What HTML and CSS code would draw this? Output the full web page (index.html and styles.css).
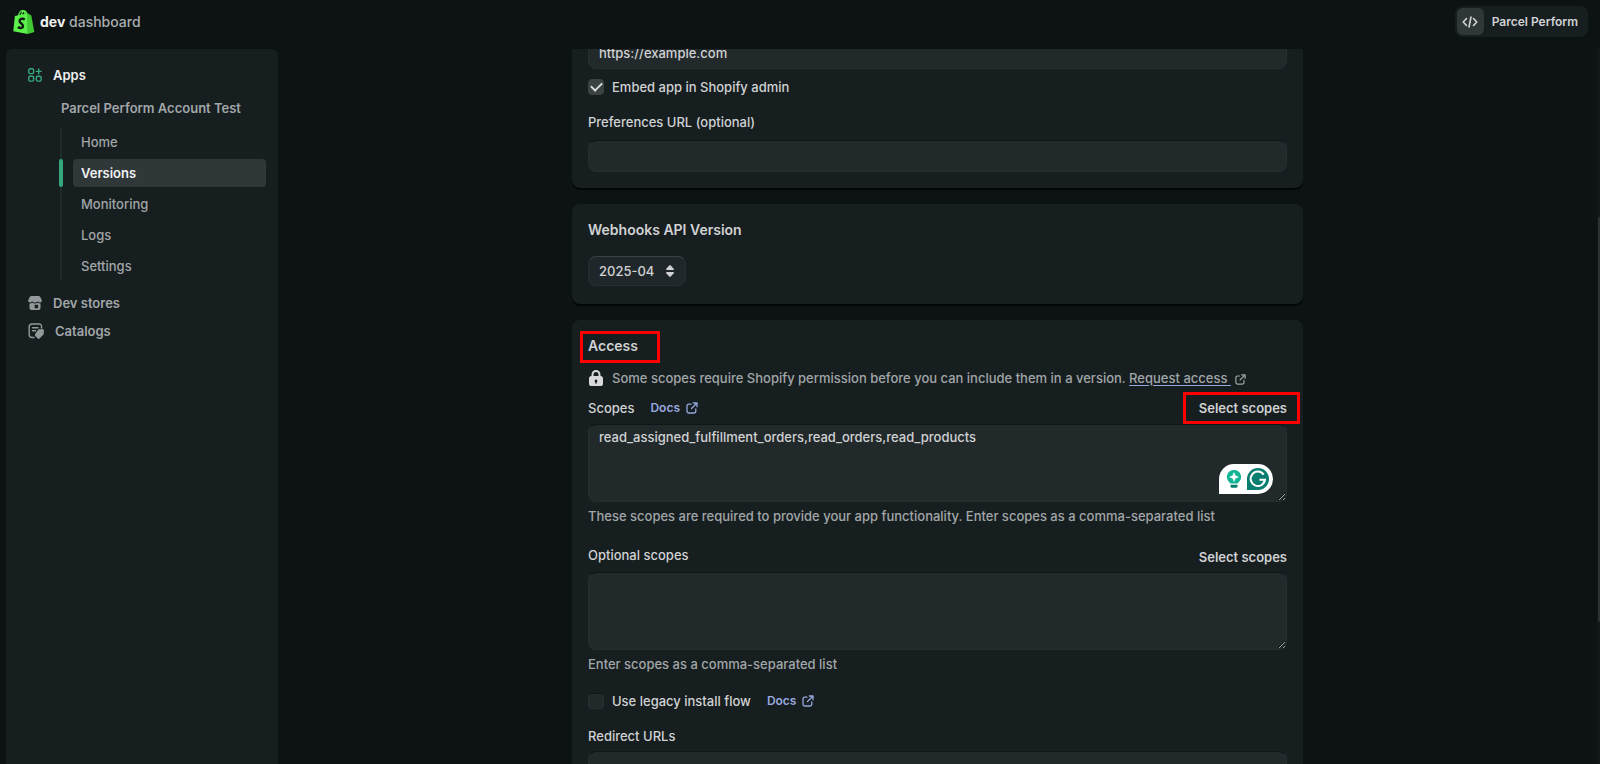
FILE: index.html
```html
<!DOCTYPE html>
<html lang="en">

<head>
    <meta charset="UTF-8">
    <meta name="viewport" content="width=device-width, initial-scale=1">
    <title>dev dashboard</title>
    <link rel="stylesheet" href="styles.css">
</head>

<body>
    <svg class="sprite" aria-hidden="true">
        <symbol id="external" viewBox="0 0 12 12">
            <path d="M5 2.2H2.7A1.7 1.7 0 0 0 1 3.900V9.300A1.700 1.700 0 0 0 2.700 11H8.100A1.700 1.700 0 0 0 9.800 9.300V7M7.300 1H11V4.700M11 1L5.500 6.500" fill="none" stroke="currentColor" stroke-width="1.300" stroke-linecap="round" stroke-linejoin="round" />
        </symbol>
    </svg>
    <header class="topbar">
        <a class="brand" href="#">
            <svg width="22" height="26" viewBox="0 0 22 26" aria-hidden="true">
                <path d="M1.900 7.100L14.800 4.300V24.900L.3 22.200Z" fill="#5cf24b" />
                <path d="M14.800 4.300L18.300 6.400L21.300 22.900L14.800 24.900Z" fill="#41c932" />
                <path d="M5.500 7C6.300 3.600 8.300 1.500 9.900 1.700C11.600 2 12 4 12 5.600M8.500 6.200C8.800 3.200 10.500 1.400 12 2C13.200 2.500 13.600 4 13.700 5.300" fill="none" stroke="#5cf24b" stroke-width="1.300" />
                <path d="M11.800 10.300C9.300 9.100 6.500 10 6.600 12.100C6.700 14.500 10.100 14.500 10 17C9.900 19.600 6.700 19.500 4.900 18" fill="none" stroke="#0c1a10" stroke-width="2.400" />
            </svg>
            <span><b>dev</b> dashboard</span>
        </a>
        <button class="account" type="button">
            <span class="account-icon">
                <svg width="16" height="12" viewBox="0 0 16 12" fill="none" stroke="currentColor" stroke-width="1.600" stroke-linecap="round" stroke-linejoin="round" aria-hidden="true">
                    <path d="M4.500 2.500L1.200 6L4.500 9.500M11.500 2.500L14.800 6L11.500 9.500M9 1L7 11" />
                </svg>
            </span>
            Parcel Perform
        </button>
    </header>

    <div class="layout">
        <nav class="sidebar">
            <a class="nav-top active" href="#">
                <svg width="14" height="14" viewBox="0 0 14 14" fill="none" stroke="#36a67d" stroke-width="1.400" stroke-linecap="round" aria-hidden="true">
                    <rect x=".8" y=".8" width="4.800" height="4.800" rx="1.300" />
                    <rect x=".8" y="8.300" width="4.800" height="4.800" rx="1.300" />
                    <rect x="8.300" y="8.300" width="4.800" height="4.800" rx="1.300" />
                    <path d="M10.700 1V5.800M8.300 3.400H13.100" />
                </svg>
                Apps
            </a>
            <a class="nav-app" href="#">Parcel Perform Account Test</a>
            <div class="nav-tree">
                <a href="#">Home</a>
                <a class="current" href="#">Versions</a>
                <a href="#">Monitoring</a>
                <a href="#">Logs</a>
                <a href="#">Settings</a>
            </div>
            <a class="nav-top" href="#">
                <svg width="14" height="14" viewBox="0 0 14 14" aria-hidden="true">
                    <path d="M3.200 0H10.800Q11.700 0 12.100 .8L13.900 4.200Q14 6.400 12 6.500Q10.500 6.500 10 5.300Q9 6.500 7 6.500Q5 6.500 4 5.300Q3.500 6.500 2 6.500Q0 6.400 .1 4.200L1.900 .8Q2.300 0 3.200 0Z" fill="#94999b" />
                    <path d="M1.500 7.400Q3 7.600 4.100 6.800Q7 8.300 9.900 6.800Q11 7.600 12.500 7.400V12Q12.500 14 10.500 14H3.500Q1.500 14 1.500 12Z" fill="#94999b" />
                    <path d="M6.700 9.300Q6.700 8.700 7.300 8.700H9.500Q10.100 8.700 10.100 9.300V12.300H6.700Z" fill="#171e20" />
                </svg>
                Dev stores
            </a>
            <a class="nav-top" href="#">
                <svg width="16" height="16" viewBox="0 0 16 16" fill="none" stroke="#94999b" stroke-width="1.400" stroke-linecap="round" aria-hidden="true">
                    <path d="M13.500 5V3.500Q13.500 1 11 1H4Q1.200 1 1.200 3.800V11.500Q1.200 14.500 4 14.500H6M4.500 4.800H10M4.500 7.700H7.500" />
                    <path d="M10.900 7L14.300 6.700Q15.200 6.600 15.200 7.600L15 11L11.500 14.600Q10.700 15.300 9.900 14.600L8 12.700Q7.300 11.900 8 11Z" fill="#94999b" />
                </svg>
                Catalogs
            </a>
        </nav>

        <main class="content">
            <form class="cards">
                <section class="card">
                    <input class="field" id="app-url" type="text" value="https://example.com" aria-label="App URL">
                    <div class="check-row">
                        <input class="check" type="checkbox" id="embed" checked>
                        <label for="embed">Embed app in Shopify admin</label>
                    </div>
                    <label class="field-label" for="preferences">Preferences URL (optional)</label>
                    <input class="field" id="preferences" type="text">
                </section>

                <section class="card webhooks">
                    <h2 id="webhooks">Webhooks API Version</h2>
                    <div class="select">
                        <select aria-labelledby="webhooks">
                            <option>2025-04</option>
                        </select>
                        <svg width="8" height="12" viewBox="0 0 8 12" fill="#d0d2d3" aria-hidden="true">
                            <path d="M3.200 .6Q4 -.2 4.800 .6L7.700 3.800Q8.200 4.900 7.200 5H.8Q-.2 4.900 .3 3.800Z" />
                            <path d="M3.200 11.400Q4 12.200 4.800 11.400L7.700 8.200Q8.200 7.100 7.200 7H.8Q-.2 7.100 .3 8.200Z" />
                        </svg>
                    </div>
                </section>

                <section class="card">
                    <h2 class="marked marked-title">Access</h2>
                    <p class="notice">
                        <svg width="16" height="16" viewBox="0 0 16 16" aria-hidden="true">
                            <path d="M4.500 7V4.500A3.500 3.500 0 0 1 11.500 4.500V7" fill="none" stroke="#d6d8d9" stroke-width="2" />
                            <path d="M3.500 6H12.500Q15 6 15 8.500V14Q15 16 13 16H3Q1 16 1 14V8.500Q1 6 3.500 6ZM8 9.400A1.500 1.500 0 0 0 7.200 12.100V13.400H8.800V12.100A1.500 1.500 0 0 0 8 9.400Z" fill="#d6d8d9" />
                        </svg>
                        <span>Some scopes require Shopify permission before you can include them in a version.
                            <a class="request" href="#"><u>Request access&nbsp;</u><svg width="11" height="11" aria-hidden="true"><use href="#external" /></svg></a></span>
                    </p>
                    <div class="scope-head">
                        <label for="scopes">Scopes</label>
                        <a class="docs" href="#">Docs <svg width="12" height="12" aria-hidden="true"><use href="#external" /></svg></a>
                        <button class="select-scopes marked marked-button" type="button">Select scopes</button>
                    </div>
                    <div class="editor">
                        <textarea class="field" id="scopes" spellcheck="false">read_assigned_fulfillment_orders,read_orders,read_products</textarea>
                        <div class="assistant">
                            <svg width="16" height="20" viewBox="0 0 16 20" aria-hidden="true">
                                <path d="M8 1A7 7 0 0 1 12.500 13.400L11.500 14.500H4.500L3.500 13.400A7 7 0 0 1 8 1Z" fill="#11b494" />
                                <path d="M8 3.700L9.300 6.700L12.300 8L9.300 9.300L8 12.300L6.700 9.300L3.700 8L6.700 6.700Z" fill="#fff" stroke="#fff" stroke-width=".6" stroke-linejoin="round" />
                                <path d="M4.500 15.700H11.500V17.200Q11.500 18.700 10 18.700H6Q4.500 18.700 4.500 17.200Z" fill="#087e70" />
                            </svg>
                            <svg width="22" height="22" viewBox="0 0 22 22" aria-hidden="true">
                                <path d="M0 22V11A11 11 0 1 1 11 22Z" fill="#087e70" />
                                <path d="M16.700 6.600A7.200 7.200 0 1 0 18 11.700H12.500M18 11.700L16.200 15.400" fill="none" stroke="#fff" stroke-width="2" />
                            </svg>
                        </div>
                    </div>
                    <p class="help">These scopes are required to provide your app functionality. Enter scopes as a comma-separated list</p>

                    <div class="scope-head optional">
                        <label for="optional-scopes">Optional scopes</label>
                        <button class="select-scopes" type="button">Select scopes</button>
                    </div>
                    <textarea class="field" id="optional-scopes"></textarea>
                    <p class="help">Enter scopes as a comma-separated list</p>

                    <div class="check-row legacy">
                        <input class="check" type="checkbox" id="legacy">
                        <label for="legacy">Use legacy install flow</label>
                        <a class="docs" href="#">Docs <svg width="12" height="12" aria-hidden="true"><use href="#external" /></svg></a>
                    </div>
                    <label class="field-label redirects" for="redirects">Redirect URLs</label>
                    <textarea class="field" id="redirects"></textarea>
                </section>
            </form>
        </main>
        <div class="scrollbar"></div>
    </div>
</body>

</html>
```

FILE: styles.css
```css
* {
    box-sizing: border-box;
}

body {
    margin: 0;
    height: 100vh;
    display: flex;
    flex-direction: column;
    overflow: hidden;
    background: #0d1313;
    color: #d0d2d3;
    color-scheme: dark;
    font-family: Inter, "Liberation Sans", sans-serif;
    font-size: 13px;
    font-weight: 500;
    line-height: 20px;
}

a {
    color: inherit;
    text-decoration: none;
}

button,
input,
select,
textarea {
    font: inherit;
    color: inherit;
}

h2,
p {
    margin: 0;
}

h2 {
    font-size: 14px;
    font-weight: 600;
}

.sprite {
    position: absolute;
    width: 0;
    height: 0;
}

/* top bar */

.topbar {
    flex: none;
    display: flex;
    justify-content: space-between;
    height: 49px;
    padding: 6px 12px 0 13px;
}

.brand {
    display: flex;
    align-items: center;
    gap: 5px;
    height: 32px;
    font-size: 14px;
    color: #a9adaf;
}

.brand b {
    font-weight: 700;
    color: #f0f2f2;
}

.account {
    display: flex;
    align-items: center;
    gap: 8px;
    height: 31px;
    padding: 2px 10px 2px 2px;
    border: 0;
    border-radius: 8px;
    background: #171e20;
    font-size: 12px;
    font-weight: 600;
}

.account-icon {
    display: grid;
    place-items: center;
    width: 27px;
    height: 27px;
    border-radius: 6px;
    background: #303739;
}

/* sidebar */

.layout {
    flex: 1;
    display: flex;
    min-height: 0;
}

.sidebar {
    flex: none;
    width: 272px;
    margin-left: 6px;
    padding: 12px 12px 0 22px;
    border-radius: 6px 6px 0 0;
    background: #171e20;
    color: #a1a6a8;
}

.nav-top {
    display: flex;
    align-items: center;
    gap: 11px;
    height: 28px;
    font-weight: 600;
}

.nav-top.active {
    color: #f0f2f2;
}

.nav-app {
    display: block;
    margin: 9px 0 10px 33px;
    font-weight: 600;
}

.nav-tree {
    display: flex;
    flex-direction: column;
    gap: 3px;
    margin: 0 0 9px 32px;
    padding-left: 11px;
    border-left: 2px solid #1d2c2b;
}

.nav-tree a {
    position: relative;
    padding: 4px 8px;
    border-radius: 4px;
}

.nav-tree .current {
    background: #303739;
    color: #f0f2f2;
    font-weight: 600;
}

.nav-tree .current::before {
    content: "";
    position: absolute;
    left: -14px;
    top: 0;
    bottom: 0;
    width: 4px;
    border-radius: 2px;
    background: #36a67d;
}

/* cards */

.content {
    flex: 1;
    overflow: hidden;
    display: flex;
    justify-content: center;
}

.cards {
    width: 100%;
    max-width: 731px;
    margin-top: -28px;
    display: flex;
    flex-direction: column;
    gap: 16px;
}

.card {
    padding: 16px;
    border-radius: 8px;
    background: #171e20;
    box-shadow: 0 2px 0 #030606;
}

.card.webhooks {
    padding-bottom: 18px;
}

.field {
    display: block;
    width: 100%;
    height: 32px;
    margin: 0;
    padding: 0 10px;
    border: 1px solid #272e30;
    border-top-color: #101617;
    border-radius: 8px;
    outline: 0;
    background: #22292b;
}

textarea.field {
    height: 78px;
    padding: 2px 10px;
    resize: vertical;
}

.field-label {
    display: block;
    margin-bottom: 8px;
}

.field-label.redirects {
    margin-bottom: 5px;
}

.check-row {
    display: flex;
    align-items: center;
    gap: 8px;
    margin: 8px 0 15px;
}

.check {
    appearance: none;
    width: 16px;
    height: 16px;
    margin: 0;
    border: 1px solid #272e30;
    border-top-color: #101617;
    border-radius: 4px;
    background: #22292b;
}

.check:checked {
    display: grid;
    place-items: center;
    border-color: #3b4244;
    background: #3b4244;
}

.check:checked::before {
    content: "";
    width: 9px;
    height: 5px;
    margin-bottom: 3px;
    border-left: 2px solid #d6d8d9;
    border-bottom: 2px solid #d6d8d9;
    transform: rotate(-45deg);
}

.select {
    display: inline-grid;
    align-items: center;
    margin-top: 16px;
    vertical-align: top;
}

.select > * {
    grid-area: 1 / 1;
}

.select select {
    appearance: none;
    width: 98px;
    height: 30px;
    padding: 0 10px;
    border: 1px solid #272e30;
    border-top-color: #3b4244;
    border-radius: 8px;
    background: #20272a;
}

.select svg {
    justify-self: end;
    margin-right: 12px;
    pointer-events: none;
}

/* access card */

.notice {
    display: flex;
    align-items: center;
    gap: 8px;
    margin: 12px 0 10px;
    color: #a1a6a8;
}

.request u {
    text-decoration-color: #97a8df;
    text-underline-offset: 2px;
}

.request svg {
    margin-left: 4px;
    vertical-align: -2px;
}

.scope-head {
    display: flex;
    align-items: center;
    gap: 16px;
    margin-bottom: 6px;
}

.scope-head.optional {
    align-items: flex-start;
    margin: 19px 0 5px;
}

.docs {
    display: flex;
    align-items: center;
    gap: 6px;
    color: #97a8df;
    font-size: 12px;
    font-weight: 600;
}

.select-scopes {
    margin-left: auto;
    padding: 0;
    border: 0;
    background: none;
    font-weight: 600;
}

.optional .select-scopes {
    padding-top: 2px;
}

.editor {
    position: relative;
}

.assistant {
    position: absolute;
    right: 14px;
    bottom: 8px;
    display: flex;
    align-items: center;
    gap: 5px;
    padding: 4px 4px 4px 7px;
    border-radius: 15px 15px 15px 0;
    background: #fff;
}

.assistant svg {
    display: block;
}

.help {
    margin-top: 4px;
    color: #a1a6a8;
}

.check-row.legacy {
    margin-top: 17px;
}

.legacy .docs {
    margin-left: 8px;
}

/* red callouts */

.marked {
    position: relative;
}

.marked::after {
    content: "";
    position: absolute;
    border: 3px solid #f00;
    border-radius: 1px;
}

.marked-title {
    width: max-content;
}

.marked-title::after {
    inset: -5px -22px -7px -8px;
}

.marked-button::after {
    inset: -6px -13px -6px -16px;
}

/* page scroll */

.scrollbar {
    flex: none;
    width: 3px;
    padding-top: 168px;
    background: #121819;
}

.scrollbar::before {
    content: "";
    display: block;
    height: 74%;
    margin-left: 1px;
    border-radius: 2px;
    background: #2c3233;
}
```
